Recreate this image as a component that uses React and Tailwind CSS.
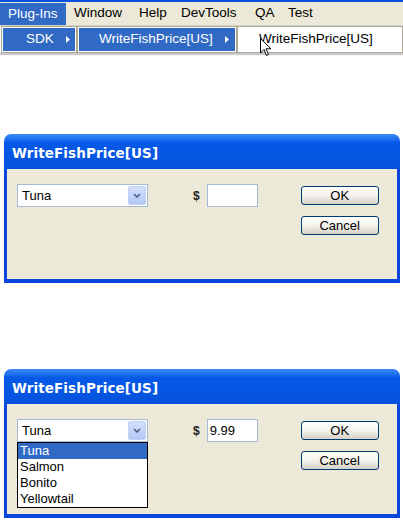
import React from 'react';

const font = { fontFamily: '"Liberation Sans", Arial, sans-serif' };

const Arrow = () => (
    <svg width="4" height="7" viewBox="0 0 4 7" className="shrink-0">
        <path d="M0 0 L4 3.5 L0 7 Z" fill="#fff" />
    </svg>
);

const Cursor = () => (
    <svg width="12" height="19" viewBox="0 0 12 19" className="absolute left-[22px] top-[11px]">
        <path d="M0.5 0.5 L0.5 15 L4 11.5 L6.5 17.5 L8.5 16.5 L6 10.8 L11 10.8 Z" fill="#fff" stroke="#000" strokeWidth="1" />
    </svg>
);

const MenuBar = () => {
    const items = [
        { label: 'Window', w: 'w-[65px]' },
        { label: 'Help', w: 'w-[42px]' },
        { label: 'DevTools', w: 'w-[74px]' },
        { label: 'QA', w: 'w-[33px]' },
        { label: 'Test', w: 'w-[40px]' },
    ];
    return (
        <div className="text-[13.5px] text-black">
            <div className="h-[2px] bg-[#0a50e0]" />
            <div className="flex h-[24px] bg-[#ece9d8] border-b border-[#d8d4c4]">
                <div className="w-[66px] mt-[1px] bg-[#316ac5] text-white flex items-center pl-[8px]">Plug-Ins</div>
                {items.map((it) => (
                    <div key={it.label} className={`${it.w} flex items-center pl-[8px]`}>{it.label}</div>
                ))}
            </div>
            <div className="flex h-[27px] shadow-[0_2px_1px_#c9c9c9]">
                <div className="ml-[1px] w-[76px] border border-[#aca899] bg-white p-[1px]">
                    <div className="h-full bg-[#316ac5] text-white flex items-center pl-[23px] pr-[5px] justify-between">
                        <span>SDK</span>
                        <Arrow />
                    </div>
                </div>
                <div className="w-[160px] border border-[#aca899] bg-white p-[1px]">
                    <div className="h-full bg-[#316ac5] text-white flex items-center pl-[20px] pr-[6px] justify-between">
                        <span>WriteFishPrice[US]</span>
                        <Arrow />
                    </div>
                </div>
                <div className="relative flex-1 border border-[#aca899] bg-white flex items-center pl-[21px]">
                    <span>WriteFishPrice[US]</span>
                    <Cursor />
                </div>
            </div>
        </div>
    );
};

const ComboButton = () => (
    <div className="w-[18px] h-full bg-gradient-to-b from-[#d3e0fd] to-[#b3c7f5] border border-[#c4d2f2] rounded-[2px] flex items-center justify-center">
        <svg width="8" height="5" viewBox="0 0 8 5">
            <path d="M1 1 L4 4 L7 1" fill="none" stroke="#4d6185" strokeWidth="1.6" />
        </svg>
    </div>
);

const Button = ({ children }) => (
    <div className="w-[78px] h-[19px] rounded-[3px] border border-[#003c74] bg-gradient-to-b from-white via-[#f3f2ec] to-[#d6d0c5] flex items-center justify-center text-[13px] text-black">
        {children}
    </div>
);

const fish = ['Tuna', 'Salmon', 'Bonito', 'Yellowtail'];

const Dialog = ({ open, price }) => (
    <div className="ml-[4px] w-[396px]" style={font}>
        <div className="h-[35px] rounded-t-[7px] bg-gradient-to-b from-[#3c8cf8] via-[#0659e7] via-25% to-[#0452dc] flex items-center pl-[8px] pt-[3px]">
            <span className="text-white font-bold text-[13.5px] tracking-[0.1px]" style={{ fontFamily: '"DejaVu Sans", Verdana, sans-serif' }}>WriteFishPrice[US]</span>
        </div>
        <div className="h-[114px] border-x-[3px] border-b-[4px] border-[#0a46dc] bg-[#ece9d8] flex pl-[10px] pt-[15px] text-[13px] text-black">
            <div className="relative w-[131px] h-[23px]">
                <div className="w-full h-full bg-white border border-[#a5b9d6] flex items-center justify-between pl-[4px] p-[1px]">
                    <span>Tuna</span>
                    <ComboButton />
                </div>
                {open && (
                    <div className="absolute left-0 top-[23px] w-[131px] bg-white border border-black">
                        {fish.map((f, i) => (
                            <div key={f} className={`h-[16px] flex items-center pl-[2px] ${i === 0 ? 'bg-[#316ac5] text-white' : ''}`}>{f}</div>
                        ))}
                    </div>
                )}
            </div>
            <div className="ml-[45px] h-[23px] flex items-center font-bold text-[12px] text-[#222]">$</div>
            <div className="ml-[7px] w-[51px] h-[23px] bg-white border border-[#a5b9d6] flex items-center pl-[2px]">{price}</div>
            <div className="ml-[43px] pt-[2px] flex flex-col gap-[11px]">
                <Button>OK</Button>
                <Button>Cancel</Button>
            </div>
        </div>
    </div>
);

export default function App() {
    return (
        <div className="w-[403px] h-[521px] bg-white overflow-hidden" style={font}>
            <MenuBar />
            <div className="mt-[81px]">
                <Dialog open={false} price="" />
            </div>
            <div className="mt-[86px]">
                <Dialog open={true} price="9.99" />
            </div>
        </div>
    );
}
